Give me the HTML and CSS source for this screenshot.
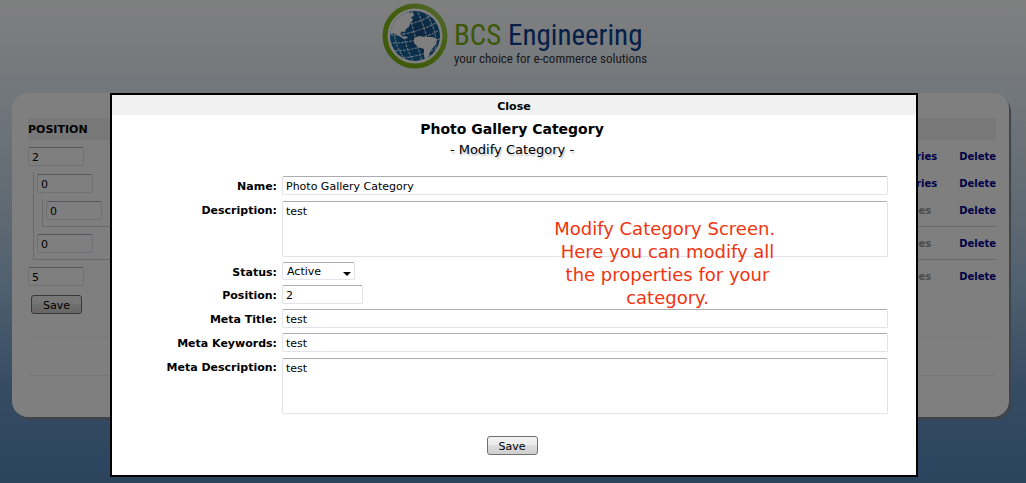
FILE: index.html
```html
<!DOCTYPE html>
<html lang="en">
<head>
  <meta charset="UTF-8" />
  <meta name="viewport" content="width=device-width, initial-scale=1.0"/>
  <title>Photo Gallery Category | BCS Engineering</title>
  <link rel="stylesheet" href="styles.css">
</head>
<body>

  <header class="header">
    <svg class="logo" width="264" height="74" viewBox="0 0 264 74" role="img" aria-label="BCS Engineering">
      <defs>
        <radialGradient id="sea" cx="60%" cy="45%" r="60%">
          <stop offset="0" stop-color="#1d4a80"/>
          <stop offset="1" stop-color="#146aa4"/>
        </radialGradient>
        <linearGradient id="ring" x1="0" y1="1" x2="1" y2="0">
          <stop offset="0" stop-color="#78b010"/>
          <stop offset="0.6" stop-color="#86bc20"/>
          <stop offset="1" stop-color="#aed468"/>
        </linearGradient>
        <clipPath id="ball"><circle cx="34" cy="36" r="25"/></clipPath>
      </defs>
      <circle cx="34" cy="36" r="30" fill="#fff" stroke="url(#ring)" stroke-width="5"/>
      <circle cx="34" cy="36" r="25" fill="url(#sea)"/>
      <g clip-path="url(#ball)">
        <g fill="none" stroke="#dce8f2" stroke-width="1" stroke-dasharray="3 1" transform="rotate(-15 34 36)">
          <path d="M9 20q25 6 50 0M7 28q27 7 54 0M7 36q27 8 54 0M7 44q27 8 54 0M9 52q25 7 50 0M14 59q20 4 40 0"/>
          <path d="M34 10v52M26 10q-6 26 0 52M42 10q6 26 0 52M20 12q-12 24 0 48M48 12q12 24 0 48"/>
        </g>
        <path d="M5 32V14L24 8l3 5 5-1 1 4-3 1 2 3-3 3-1 4-3 2-1 3-3-1-2 3 3 3 3-1 2 2-4 1-5-3-5-3-5 2z" fill="#fff"/>
        <path d="M33 38l5-2 6 1 8 0 4 2-1 5-3 4-3 3-2 7-3 2-1-5 0-6-6-2-4-4z" fill="#fff"/>
      </g>
      <text class="logo-name" x="73" y="45"><tspan class="logo-bcs">BCS</tspan> Engineering</text>
      <text class="logo-tagline" x="73" y="63">your choice for e-commerce solutions</text>
    </svg>
  </header>

  <main class="panel">
    <div class="list-head">POSITION</div>
    <ul class="tree">
      <li>
        <div class="row">
          <input class="field pos" type="text" value="2" aria-label="Position">
          <a class="sub" href="#">Categories</a><a href="#">Delete</a>
        </div>
        <ul>
          <li>
            <div class="row">
              <input class="field pos" type="text" value="0" aria-label="Position">
              <a class="sub" href="#">Categories</a><a href="#">Delete</a>
            </div>
            <ul>
              <li>
                <div class="row">
                  <input class="field pos" type="text" value="0" aria-label="Position">
                  <span class="sub off">Images</span><a href="#">Delete</a>
                </div>
              </li>
            </ul>
          </li>
          <li>
            <div class="row">
              <input class="field pos" type="text" value="0" aria-label="Position">
              <span class="sub off">Images</span><a href="#">Delete</a>
            </div>
          </li>
        </ul>
      </li>
      <li>
        <div class="row">
          <input class="field pos" type="text" value="5" aria-label="Position">
          <span class="sub off">Images</span><a href="#">Delete</a>
        </div>
      </li>
    </ul>
    <button class="btn list-save" type="button">Save</button>
    <hr>
    <hr>
  </main>

  <div class="overlay">
    <div class="modal" role="dialog" aria-labelledby="modalTitle">
      <button class="close" type="button">Close</button>

      <div class="content">
        <h1 id="modalTitle">Photo Gallery Category</h1>
        <p class="subtitle">- Modify Category -</p>

        <form class="form">
          <label for="name">Name:</label>
          <input class="field" id="name" type="text" value="Photo Gallery Category">

          <label for="description">Description:</label>
          <textarea class="field" id="description">test</textarea>

          <label for="status">Status:</label>
          <div class="select-wrap">
            <select class="field" id="status">
              <option>Active</option>
              <option>Inactive</option>
            </select>
          </div>

          <label for="position">Position:</label>
          <input class="field short" id="position" type="text" value="2">

          <label for="metaTitle">Meta Title:</label>
          <input class="field" id="metaTitle" type="text" value="test">

          <label for="metaKeywords">Meta Keywords:</label>
          <input class="field" id="metaKeywords" type="text" value="test">

          <label for="metaDescription">Meta Description:</label>
          <textarea class="field" id="metaDescription">test</textarea>
        </form>

        <button class="btn modal-save" type="button">Save</button>
      </div>

      <p class="note">Modify Category Screen.<br>&nbsp;Here you can modify all<br>&nbsp;the properties for your<br>&nbsp;category.</p>
    </div>
  </div>

</body>
</html>
```
FILE: styles.css
```css
* {
  box-sizing: border-box;
}

body {
  margin: 0;
  min-height: 100vh;
  position: relative;
  font-family: Verdana, "DejaVu Sans", sans-serif;
  font-size: 11px;
  color: #000;
  background: linear-gradient(#ffffff 0%, #e6f0f8 18%, #c8dae8 38%, #a4c2de 58%, #6c98c6 80%, #5888bc 100%);
}

.header {
  height: 93px;
  text-align: center;
}

.logo {
  display: block;
  margin: 0 auto;
  overflow: visible;
}

.logo-name, .logo-tagline {
  font-family: "Roboto Condensed", Roboto, "Liberation Sans", sans-serif;
}

.logo-name {
  font-size: 29px;
  fill: #0a3f90;
}

.logo-bcs {
  fill: #78b010;
}

.logo-tagline {
  font-size: 13px;
  fill: #333;
}

/* category list */
.panel {
  margin: 0 17px 0 12px;
  padding: 25px 13px 41px 16px;
  background: #fff;
  border-radius: 16px;
  box-shadow: 2px 3px 1px #7c8894;
}

.list-head {
  height: 22px;
  line-height: 24px;
  margin-bottom: 5px;
  background: #f1f1f1;
  font-weight: bold;
}

.tree, .tree ul {
  list-style: none;
  margin: 0;
  padding: 0;
}

.tree ul {
  margin: 4px 0 5px 5px;
  padding: 0 0 4px 3px;
  border-left: 1px solid #d4d4d4;
  border-bottom: 1px solid #d4d4d4;
}

.row {
  display: flex;
  align-items: center;
  height: 23px;
  font-size: 10px;
  font-weight: bold;
}

.row a {
  color: #00008b;
  text-decoration: none;
}

.row .sub {
  margin-left: auto;
  margin-right: 22px;
}

.row .off {
  color: #999;
  margin-right: 28px;
}

.field {
  width: 100%;
  height: 19px;
  margin: 0;
  padding: 1px 3px 0;
  border: 1px solid #e2e3ea;
  border-top-color: #abadb3;
  border-radius: 2px;
  background: #fff;
  color: #000;
  font: 11px Verdana, "DejaVu Sans", sans-serif;
}

.pos {
  width: 56px;
}

.btn {
  height: 19px;
  width: 51px;
  padding: 1px 0 0;
  border: 1px solid #707070;
  border-radius: 3px;
  background: linear-gradient(#f2f2f2 0%, #ebebeb 50%, #dddddd 50%, #cfcfcf 100%);
  color: #000;
  font: 11px Verdana, "DejaVu Sans", sans-serif;
}

.list-save {
  display: block;
  margin: 7px 0 0 3px;
}

hr {
  margin: 23px 0 0;
  border: 0;
  border-top: 1px solid #f0f0f0;
}

hr + hr {
  margin-top: 37px;
}

/* modal */
.overlay {
  position: absolute;
  top: 0;
  right: 0;
  bottom: 0;
  left: 0;
  padding: 93px 108px 0 110px;
  background: rgba(0,0,0,0.5);
}

.modal {
  position: relative;
  padding-bottom: 20px;
  border: 2px solid #000;
  background: #fff;
  text-align: center;
}

.close {
  display: block;
  width: 100%;
  height: 20px;
  padding: 2px 0 0;
  border: 0;
  background: #f1f1f1;
  color: #000;
  font: bold 11px Verdana, "DejaVu Sans", sans-serif;
}

.content {
  padding-right: 4px;
}

h1 {
  margin: 5px 0 4px;
  font-size: 14px;
  line-height: 18px;
}

.subtitle {
  margin: 0 0 18px;
  font-size: 13px;
  line-height: 16px;
  text-shadow: 1px 2px 2px #bbb;
}

.form {
  display: grid;
  grid-template-columns: 165px 1fr;
  gap: 5px;
  padding-right: 24px;
}

.form label {
  line-height: 22px;
  height: 18px;
  text-align: right;
  font-weight: bold;
}

.form textarea {
  display: block;
  height: 56px;
  margin-top: 1px;
  padding: 3px;
  resize: none;
}

.form .short {
  width: 81px;
}

.select-wrap {
  position: relative;
  width: 73px;
  height: 18px;
}

.select-wrap select {
  display: block;
  height: 18px;
  padding: 1px 4px 0;
  appearance: none;
}

.select-wrap::after {
  content: "";
  position: absolute;
  right: 4px;
  top: 10px;
  border: 4px solid transparent;
  border-top-color: #000;
  border-bottom: 0;
  pointer-events: none;
}

.modal-save {
  display: block;
  margin: 22px auto 0;
}

.note {
  position: absolute;
  top: 122px;
  left: 55%;
  margin: 0;
  color: #f0340f;
  font-size: 18px;
  line-height: 23px;
  white-space: nowrap;
}
```
